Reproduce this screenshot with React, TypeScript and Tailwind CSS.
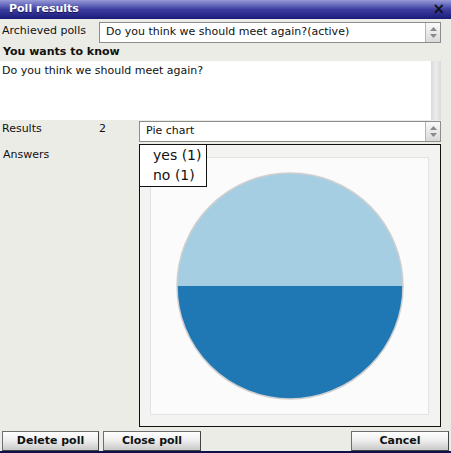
import React from 'react';

const FONT = { fontFamily: '"DejaVu Sans", Verdana, sans-serif' };

function Spinner() {
  return (
    <div className="flex w-[15px] flex-col items-center justify-center gap-[3px] border-l border-[#b5b5b5] bg-gradient-to-b from-[#fafafa] to-[#d9d9d9]">
      <svg width="7" height="4" viewBox="0 0 7 4">
        <path d="M0 4 L3.5 0 L7 4 Z" fill="#8a8a8a" />
      </svg>
      <svg width="7" height="4" viewBox="0 0 7 4">
        <path d="M0 0 L3.5 4 L7 0 Z" fill="#8a8a8a" />
      </svg>
    </div>
  );
}

function Select({ value, className }: { value: string; className: string }) {
  return (
    <div className={`flex h-[21px] border border-[#8d8d8d] bg-white ${className}`}>
      <div className="flex flex-1 items-center pl-[6px] text-[11px] text-[#111]">{value}</div>
      <Spinner />
    </div>
  );
}

function Button({ label, className }: { label: string; className: string }) {
  return (
    <button className={`h-[20px] border border-[#6e6e6e] border-b-[#444] border-r-[#444] bg-gradient-to-b from-[#ffffff] via-[#ececec] to-[#c9c9c9] text-[11px] font-bold text-[#111] ${className}`}>
      {label}
    </button>
  );
}

export default function App() {
  return (
    <div className="relative flex h-[453px] w-[451px] flex-col overflow-hidden bg-[#ecece7]" style={FONT}>
      <div className="flex h-[19px] items-center justify-between bg-gradient-to-b from-[#9a9ad8] via-[#3d3da0] to-[#1a1a78] pl-[9px] pr-[6px]">
        <span className="text-[11px] font-bold text-white [text-shadow:0_1px_0_#111150]">Poll results</span>
        <span className="text-[15px] font-bold leading-none text-[#111]">×</span>
      </div>

      <div className="mt-[3px] flex items-start">
        <span className="w-[99px] pl-[2px] pt-[1px] text-[11px] text-[#111]">Archieved polls</span>
        <Select value="Do you think we should meet again?(active)" className="w-[342px]" />
      </div>

      <div className="mt-[2px] pl-[3px] text-[11px] font-bold leading-[14px] text-[#111]">You wants to know</div>

      <div className="mt-[2px] flex h-[59px]">
        <div className="w-[431px] bg-white pl-[2px] pt-[2px] text-[11px] text-[#111]">Do you think we should meet again?</div>
        <div className="w-[10px] bg-gradient-to-r from-[#d9d9d9] via-[#ececec] to-[#dadada]" />
      </div>

      <div className="mt-[1px] flex items-start">
        <span className="w-[99px] pl-[2px] text-[11px] text-[#111]">Results</span>
        <span className="w-[40px] text-[11px] text-[#111]">2</span>
        <Select value="Pie chart" className="w-[302px]" />
      </div>

      <div className="mt-[2px] flex items-start">
        <span className="w-[139px] pl-[3px] pt-[3px] text-[11px] text-[#111]">Answers</span>
        <div className="relative flex h-[283px] w-[302px] border border-[#111] bg-[#f3f3f1] pb-[11px] pl-[10px] pr-[11px] pt-[12px]">
          <div className="flex flex-1 items-center justify-center border border-[#e2e2e2] bg-[#fbfbfb]">
            <svg width="228" height="228" viewBox="0 0 228 228">
              <path d="M1 114 A113 113 0 0 1 227 114 Z" fill="#a6cee3" />
              <path d="M1 114 A113 113 0 0 0 227 114 Z" fill="#1f78b4" />
              <circle cx="114" cy="114" r="113" fill="none" stroke="#cfcfcf" strokeWidth="1.5" />
            </svg>
          </div>
          <div className="absolute left-[-1px] top-[-1px] flex w-[68px] flex-col border border-[#111] bg-white pb-[1px] pl-[13px] text-[14px] leading-[20px] text-[#111]">
            <span>yes (1)</span>
            <span>no (1)</span>
          </div>
        </div>
      </div>

      <div className="mt-[4px] flex items-start px-[2px]">
        <Button label="Delete poll" className="w-[97px]" />
        <Button label="Close poll" className="ml-[4px] w-[98px]" />
        <Button label="Cancel" className="ml-auto w-[98px]" />
      </div>

      <div className="absolute bottom-0 left-0 h-[2px] w-full bg-[#10104a]" />
    </div>
  );
}
